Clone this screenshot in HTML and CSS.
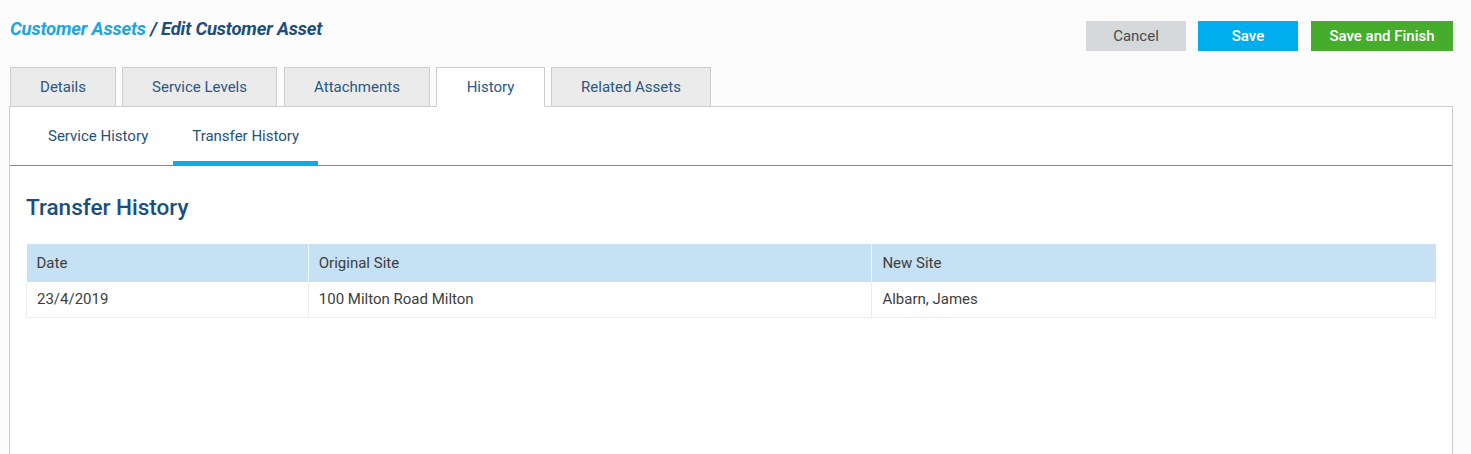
FILE: index.html
```html
<!DOCTYPE html>
<html lang="en">
<head>
<meta charset="utf-8">
<title>Edit Customer Asset</title>
<link rel="stylesheet" href="styles.css">
</head>
<body>
<div class="page">
  <header class="topbar">
    <h1 class="title"><span class="crumb">Customer Assets</span> / Edit Customer Asset</h1>
    <div class="actions">
      <button class="btn btn-cancel">Cancel</button>
      <button class="btn btn-save">Save</button>
      <button class="btn btn-finish">Save and Finish</button>
    </div>
  </header>
  <nav class="tabs">
    <div class="tab">Details</div>
    <div class="tab tab-sl">Service Levels</div>
    <div class="tab tab-att">Attachments</div>
    <div class="tab tab-hist active">History</div>
    <div class="tab tab-rel">Related Assets</div>
  </nav>
  <section class="panel">
    <div class="subtabs">
      <div class="subtab">Service History</div>
      <div class="subtab active">Transfer History</div>
    </div>
    <div class="content">
      <h2 class="heading">Transfer History</h2>
      <table class="grid">
        <colgroup><col class="c1"><col class="c2"><col class="c3"></colgroup>
        <thead>
          <tr><th>Date</th><th>Original Site</th><th>New Site</th></tr>
        </thead>
        <tbody>
          <tr><td>23/4/2019</td><td>100 Milton Road Milton</td><td>Albarn, James</td></tr>
        </tbody>
      </table>
    </div>
  </section>
</div>
</body>
</html>
```
FILE: styles.css
```css
* { box-sizing: border-box; }
html, body { margin: 0; padding: 0; }
body {
  background: #fcfcfc;
  font-family: Roboto, "Liberation Sans", Arial, sans-serif;
  font-size: 15px;
  color: #333;
  overflow: hidden;
}
.page { padding: 0 18px 0 9px; }
.topbar {
  display: flex;
  justify-content: space-between;
  align-items: flex-start;
  padding-top: 19px;
}
.title {
  margin: 0;
  padding: 0 0 0 1px;
  font-size: 18.5px;
  font-weight: 700;
  font-style: italic;
  color: #1d4e79;
  line-height: 20px;
  letter-spacing: -0.2px;
}
.crumb { color: #1aa6e0; }
.actions { display: flex; gap: 12px; padding-top: 2px; }
.btn {
  height: 30px;
  border: 0;
  padding: 0;
  font-family: Roboto, "Liberation Sans", Arial, sans-serif;
  font-size: 15px;
  cursor: pointer;
}
.btn-cancel { width: 100px; background: #d5d8db; color: #4a4a4a; }
.btn-save { width: 100px; background: #00aeef; color: #fff; font-weight: 500; }
.btn-finish { width: 142px; margin-left: 1px; background: #45ad2b; color: #fff; font-weight: 500; }

.tabs {
  display: flex;
  gap: 6px;
  margin-top: 16px;
  padding-left: 1px;
  position: relative;
  z-index: 1;
}
.tab {
  width: 106px;
  height: 40px;
  margin-bottom: -1px;
  display: flex;
  align-items: center;
  justify-content: center;
  background: #ebebeb;
  border: 1px solid #cdcdcd;
  color: #2a5784;
  font-size: 15px;
}
.tab-sl { width: 155px; }
.tab-att { width: 146px; margin-left: 1px; }
.tab-hist { width: 109px; }
.tab-rel { width: 160px; }
.tab.active { background: #fff; border-bottom-color: #fff; }

.panel {
  background: #fff;
  border: 1px solid #cdcdcd;
  min-height: 400px;
}
.subtabs {
  display: flex;
  gap: 6px;
  padding-left: 19px;
  height: 59px;
  border-bottom: 1px solid #35a6d6;
}
.subtab {
  padding: 0 19px 2px;
  display: flex;
  align-items: center;
  height: 59px;
  color: #27517c;
  font-size: 15px;
}
.subtab.active {
  border-bottom: 5px solid #0fa9e6;
  padding-top: 3px;
  padding-bottom: 0;
}
.content { padding: 28px 16px 0 16px; }
.heading {
  margin: 0 0 23px 0;
  font-size: 22.5px;
  font-weight: 500;
  color: #1a4f7b;
  line-height: 27px;
}
.grid {
  width: 100%;
  border-collapse: collapse;
  table-layout: fixed;
}
.c1 { width: 20%; }
.c2 { width: 40%; }
.c3 { width: 40%; }
.grid th, .grid td {
  text-align: left;
  font-weight: 400;
  padding: 0 10px;
  color: #3d3d3d;
  font-size: 15px;
}
.grid th {
  height: 38px;
  background: #c6e1f4;
  border-left: 1px solid #eef6fc;
}
.grid th:first-child { border-left: 0; }
.grid td {
  height: 35px;
  background: #fff;
  border: 1px solid #ececec;
  border-top: 0;
}
```
